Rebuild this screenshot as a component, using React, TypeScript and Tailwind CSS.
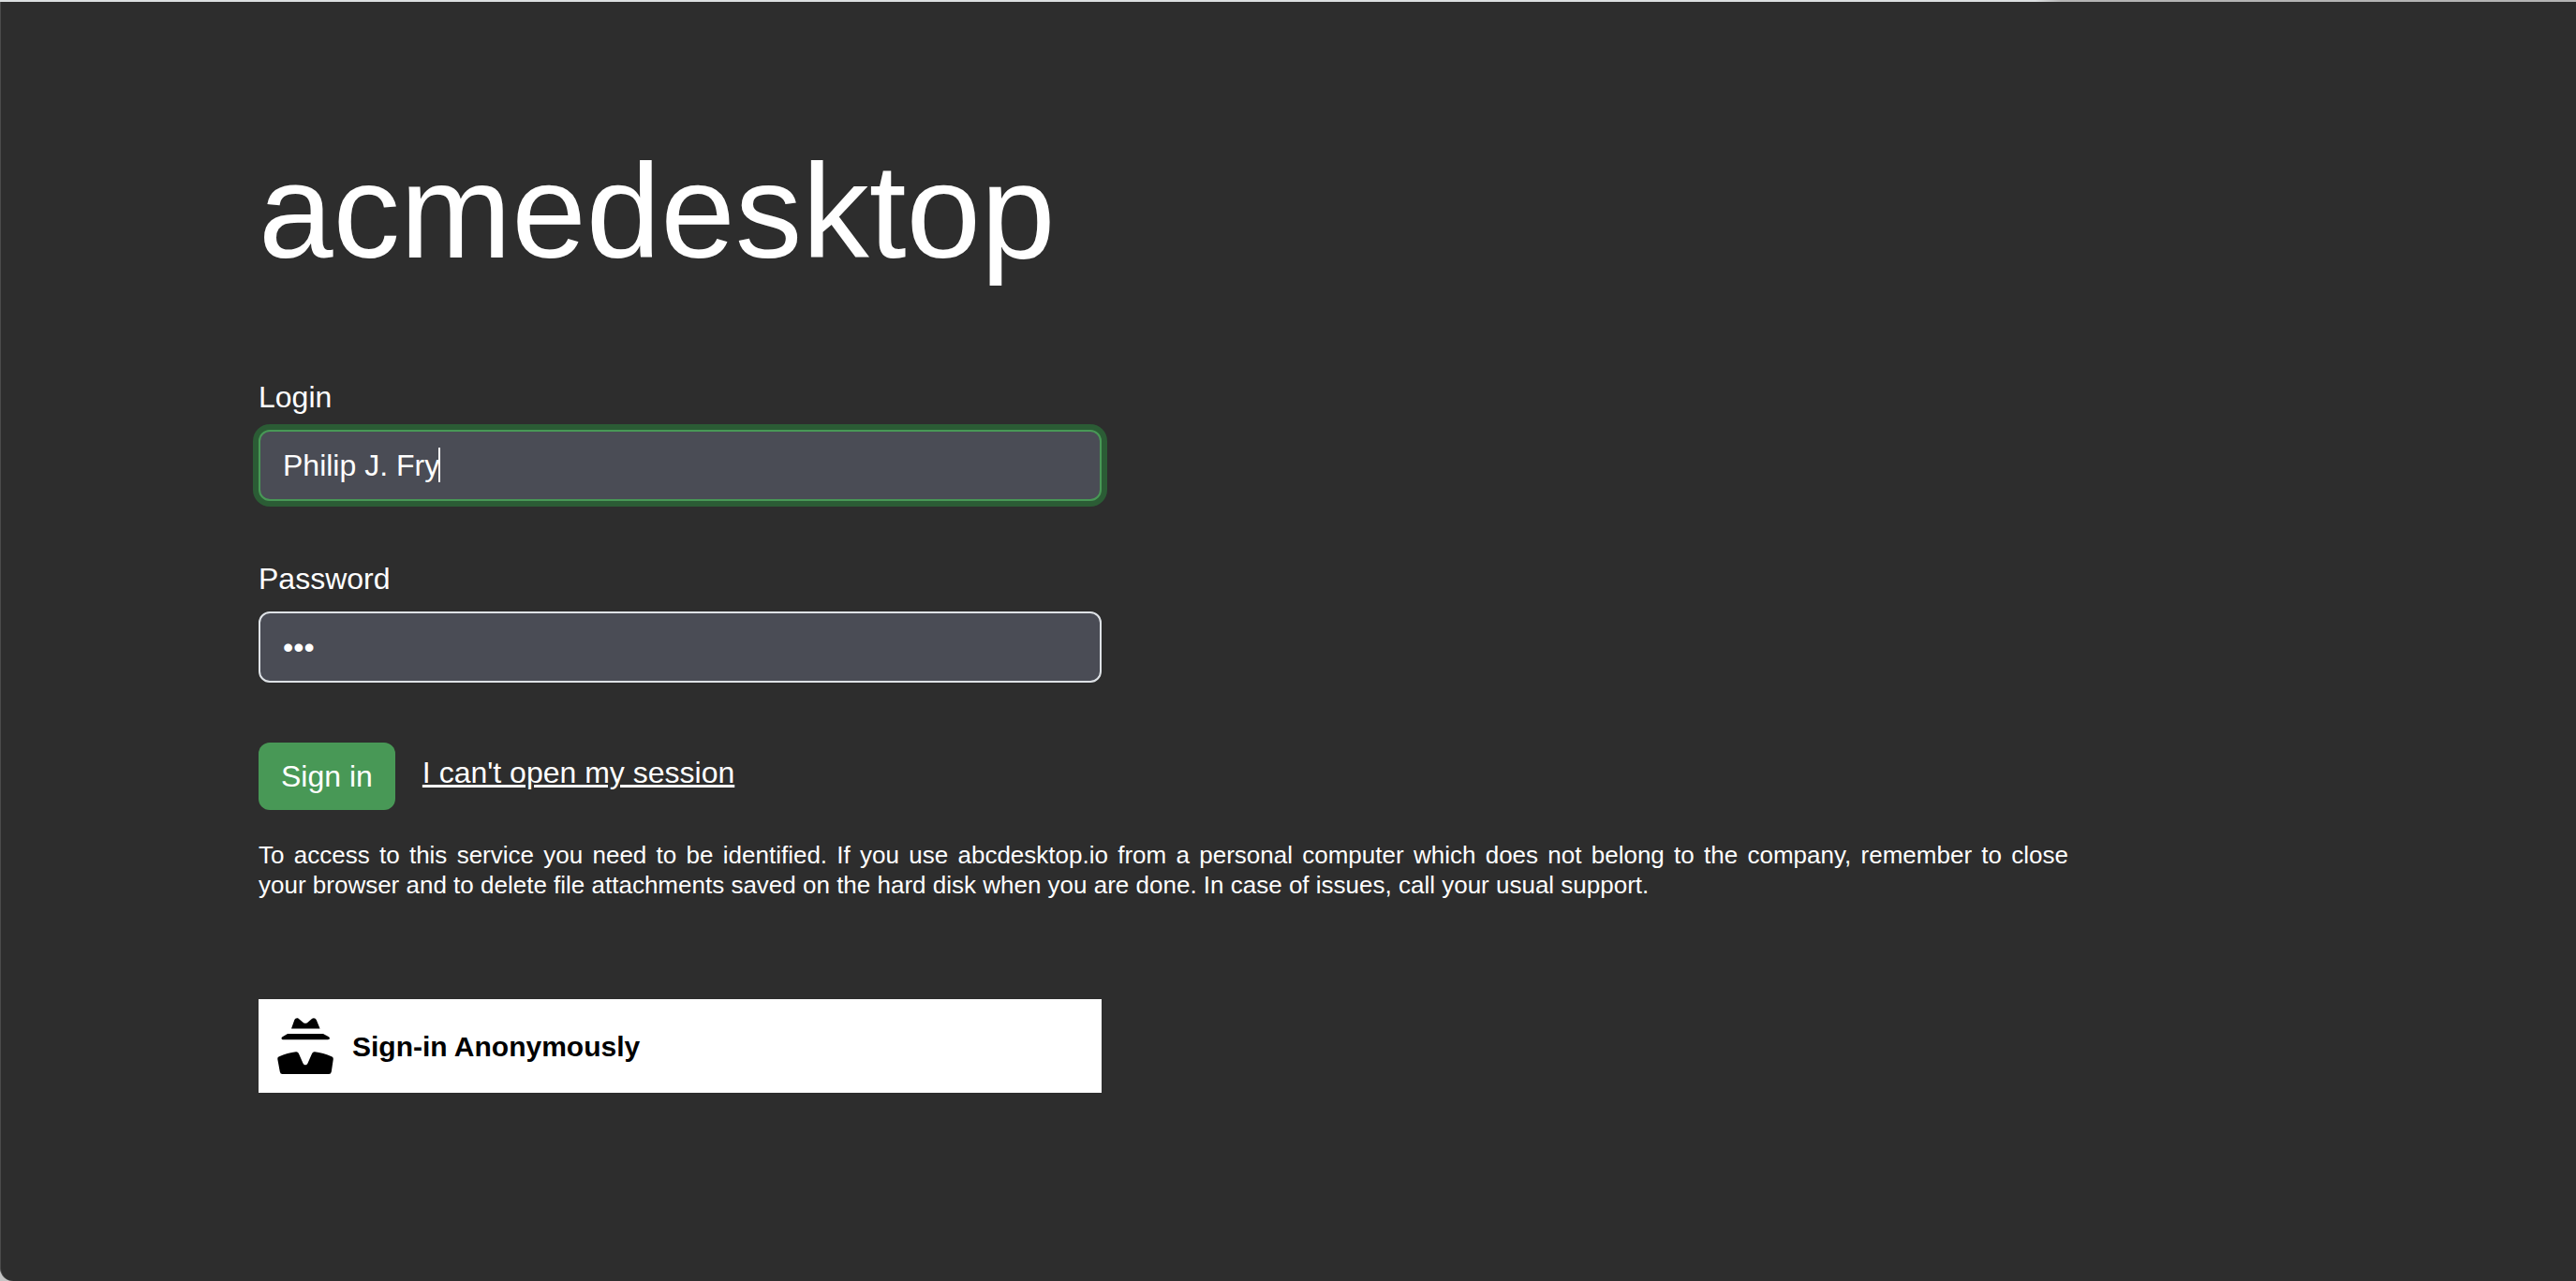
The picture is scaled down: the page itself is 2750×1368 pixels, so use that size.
const field =
  "block w-full rounded-xl border-2 bg-[#4a4c55] px-6 py-3 text-[32px] leading-[48px] text-white outline-none";

function IncognitoIcon() {
  return (
    <svg viewBox="0 0 60 60" className="size-[60px] shrink-0" fill="#000" aria-hidden="true">
      <path d="M15 11.5 18.3 2.2C19 .3 21.200-.3 22.700.7L28 5.200q2 1.300 4 0L37.200.7C38.800-.4 41 .2 41.800 2.200L45.600 11.500Z" />
      <path d="M11 17H49L54.500 20C56.800 21.300 56 23.200 54 23.200H6.500C4.300 23.200 3.800 21.200 5.500 20.200Z" />
      <path d="M1.500 41.500 C8 38.500 14 37 20 36.200Q22 36 22.900 38L27.500 48.500Q28.300 50.200 29.500 50.200H30.500Q31.700 50.200 32.500 48.500L37.100 38Q38 36 40 36.200C46 37 52 38.500 58.500 41.500Q60 42.200 59.800 44L57.800 57.500Q57.400 60 55 60H5.500Q3.200 60 2.800 57.500L.3 44Q0 42.200 1.500 41.500Z" />
    </svg>
  );
}

export default function App() {
  return (
    <div className="flex min-h-screen flex-col bg-[#c4c4c4] font-['Liberation_Sans',Arial,sans-serif] text-white">
      <div className="h-[2px] bg-linear-to-r from-[#dcdfe1] from-79% to-[#b4b4b4] to-80%" />
      <main className="grow rounded-bl-[14px] border-l border-l-[#4b4b4b] bg-[#2d2d2d] pt-[144px] pr-[542px] pb-[80px] pl-[275px]">
        <h1 className="text-[143px] leading-[160px]">acmedesktop</h1>
        <form className="mt-[94px]" onSubmit={(e) => e.preventDefault()}>
          <div className="max-w-[900px]">
            <label htmlFor="login" className="mb-[11px] block text-[32px] leading-[48px]">
              Login
            </label>
            <div className="relative">
              <input
                id="login"
                type="text"
                defaultValue="Philip J. Fry"
                className={`${field} border-[#489856] caret-transparent ring-6 ring-[#2b5c35]`}
              />
              <span className="absolute top-[19px] left-[192px] h-[37px] w-[2px] bg-white" />
            </div>
          </div>
          <div className="mt-[59px] max-w-[900px]">
            <label htmlFor="password" className="mb-[11px] block text-[32px] leading-[48px]">
              Password
            </label>
            <input id="password" type="password" defaultValue="fry" className={`${field} border-[#dee2e6]`} />
          </div>
          <div className="mt-[64px] flex gap-[29px]">
            <button type="submit" className="h-[72px] rounded-xl bg-[#489856] px-6 text-[32px] leading-[48px]">
              Sign in
            </button>
            <a href="#help" className="pt-2 text-[32px] leading-[48px] underline decoration-[3px]">
              I can't open my session
            </a>
          </div>
        </form>
        <p className="mt-8 text-justify text-[26px] leading-8">
          To access to this service you need to be identified. If you use abcdesktop.io from a personal computer which
          does not belong to the company, remember to close your&nbsp;browser and to delete file attachments saved on
          the hard disk when you are done. In case of issues, call your usual support.
        </p>
        <button
          type="button"
          className="mt-[106px] flex h-[100px] w-full max-w-[900px] items-center gap-5 bg-white px-5 text-[30px] font-bold text-black"
        >
          <IncognitoIcon />
          Sign-in Anonymously
        </button>
      </main>
    </div>
  );
}
